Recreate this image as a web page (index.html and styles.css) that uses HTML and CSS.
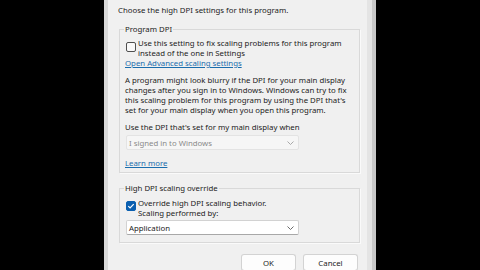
FILE: index.html
```html
<!DOCTYPE html>
<html>
<head>
  <meta charset="utf-8">
  <link rel="stylesheet" href="styles.css">
</head>
<body>
  <div class="window">
    <div class="dialog">
      <p class="intro">Choose the high DPI settings for this program.</p>

      <fieldset class="group group-dpi">
        <legend>Program DPI</legend>
        <label class="check">
          <span class="box"></span>
          <span class="check-text">Use this setting to fix scaling problems for this program<br>instead of the one in Settings</span>
        </label>
        <a class="link">Open Advanced scaling settings</a>
        <p class="note">A program might look blurry if the DPI for your main display<br>changes after you sign in to Windows. Windows can try to fix<br>this scaling problem for this program by using the DPI that's<br>set for your main display when you open this program.</p>
        <p class="field-label">Use the DPI that's set for my main display when</p>
        <div class="combo disabled">
          <span>I signed in to Windows</span>
          <svg class="chevron" width="7" height="4" viewBox="0 0 7 4"><polyline points="0.5,0.5 3.5,3.5 6.5,0.5" fill="none" stroke="currentColor" stroke-width="0.9"/></svg>
        </div>
        <a class="link learn">Learn more</a>
      </fieldset>

      <fieldset class="group group-override">
        <legend>High DPI scaling override</legend>
        <label class="check">
          <span class="box checked">
            <svg width="10" height="10" viewBox="0 0 10 10"><polyline points="2.3,5.2 4.1,7 7.7,3.2" fill="none" stroke="#fff" stroke-width="1.2"/></svg>
          </span>
          <span class="check-text">Override high DPI scaling behavior.<br>Scaling performed by:</span>
        </label>
        <div class="combo">
          <span>Application</span>
          <svg class="chevron" width="7" height="4" viewBox="0 0 7 4"><polyline points="0.5,0.5 3.5,3.5 6.5,0.5" fill="none" stroke="currentColor" stroke-width="0.9"/></svg>
        </div>
      </fieldset>

      <div class="buttons">
        <button class="btn">OK</button>
        <button class="btn">Cancel</button>
      </div>
    </div>
  </div>
</body>
</html>
```

FILE: styles.css
```css
body {
  margin: 0;
  background: #000;
  font-family: "Noto Sans", "Liberation Sans", sans-serif;
  font-size: 7.8px;
  line-height: 10px;
  color: #1c1c1c;
}

.window {
  width: 272px;
  height: 270px;
  margin: 0 auto;
  display: flex;
  overflow: hidden;
  box-sizing: border-box;
  border-left: 4px solid #d8d8d8;
  border-right: 4px solid #c9c9c9;
}

.dialog {
  flex: 1;
  background: #f0f0f0;
  border-right: 5px solid #e4e4e4;
  padding: 5px 0 0 10px;
  white-space: nowrap;
}

p {
  margin: 0;
}

.intro {
  margin-bottom: 9px;
}

.group {
  width: 241px;
  box-sizing: border-box;
  margin: 0 0 0 1px;
  padding: 0 5px;
  border: 1px solid #d9d9d9;
  box-shadow: 1px 1px 0 #fafafa;
}

.group legend {
  padding: 0 1px;
  margin-left: -1px;
}

.group-dpi {
  padding-top: 4px;
  padding-bottom: 4px;
}

.group-override {
  margin-top: 10px;
  padding-top: 5px;
  padding-bottom: 7px;
}

.check {
  display: flex;
  align-items: flex-start;
  gap: 2px;
}

.box {
  width: 10px;
  height: 10px;
  margin: 4px 0 0 1px;
  box-sizing: border-box;
  border: 1px solid #4f4f4f;
  border-radius: 2px;
  background: #f9f9f9;
  flex-shrink: 0;
}

.box.checked {
  border-color: #0a5fb0;
  background: #0a5fb0;
  margin-top: 3px;
}

.box.checked svg {
  display: block;
  margin: -1px;
}

.link {
  display: block;
  color: #1a6dad;
  text-decoration: underline;
  width: max-content;
}

.note {
  margin-top: 7px;
}

.field-label {
  margin-top: 7px;
}

.combo {
  width: 173px;
  height: 15px;
  box-sizing: border-box;
  margin: 3px 0 0 1px;
  padding: 0 4px 0 2px;
  display: flex;
  align-items: center;
  justify-content: space-between;
  background: #fff;
  border: 1px solid #d2d2d2;
  border-bottom-color: #a8a8a8;
  border-radius: 2px;
  color: #1c1c1c;
}

.combo .chevron {
  color: #5a5a5a;
}

.combo.disabled {
  background: #f6f6f6;
  border-color: #e3e3e3;
  color: #8a8a8a;
}

.combo.disabled .chevron {
  color: #a0a0a0;
}

.group-override .combo {
  margin-top: 2px;
}

.learn {
  margin-top: 8px;
}

.buttons {
  width: 239px;
  margin: 11px 0 0 1px;
  display: flex;
  justify-content: flex-end;
  gap: 7px;
}

.btn {
  width: 55px;
  height: 17px;
  padding: 0;
  font: inherit;
  color: #1c1c1c;
  background: #fdfdfd;
  border: 1px solid #d3d3d3;
  border-bottom-color: #bdbdbd;
  border-radius: 3px;
}
```
